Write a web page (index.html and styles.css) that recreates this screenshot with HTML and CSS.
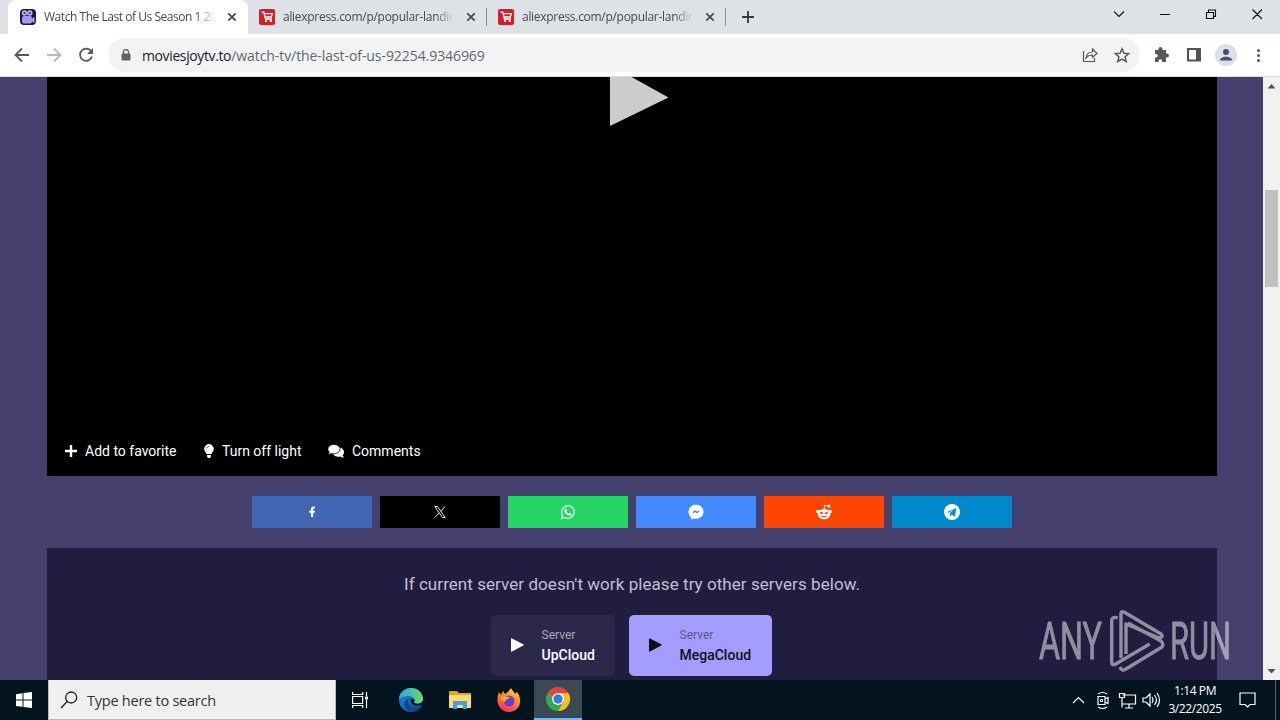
FILE: index.html
```html
<!DOCTYPE html>
<html lang="en">
<head>
<meta charset="utf-8">
<title>Watch The Last of Us Season 1</title>
<link rel="stylesheet" href="styles.css">
</head>
<body>
<svg class="defs" width="0" height="0">
  <symbol id="cart" viewBox="0 0 16 16"><rect width="16" height="16" rx="2" fill="#d21f2c"/><path d="M2.500 3.200h2.300l1.700 6.800h6.500M5 4.700h8.300l-1 3.300H6.200" fill="none" stroke="#fff" stroke-width="1.300"/><rect x="6" y="11" width="2" height="2" fill="#fff"/><rect x="10.800" y="11" width="2" height="2" fill="#fff"/></symbol>
  <symbol id="close" viewBox="0 0 10 10"><path d="M1.300 1.300l7.400 7.400M8.700 1.300L1.300 8.700" stroke="#45494d" stroke-width="1.700"/></symbol>
</svg>
<header class="tabs">
  <div class="tab active">
    <svg class="fav" viewBox="0 0 16 16"><rect width="16" height="16" rx="4" fill="#1d1a3e"/><circle cx="4.500" cy="4" r="2.700" fill="#b9b4f5"/><circle cx="9.800" cy="4" r="2.700" fill="#b9b4f5"/><circle cx="4.500" cy="4" r="1.100" fill="#302b58"/><circle cx="9.800" cy="4" r="1.100" fill="#302b58"/><rect x="2" y="7" width="10" height="7.500" rx="2" fill="#a39bf5"/><path d="M11 10l3.500-2v6L11 12z" fill="#a39bf5"/></svg>
    <span class="title t1">Watch The Last of Us Season 1 20</span>
    <svg class="x"><use href="#close"/></svg>
  </div>
  <div class="tab">
    <svg class="fav"><use href="#cart"/></svg>
    <span class="title">aliexpress.com/p/popular-landin</span>
    <svg class="x"><use href="#close"/></svg>
  </div>
  <div class="tab last">
    <svg class="fav"><use href="#cart"/></svg>
    <span class="title">aliexpress.com/p/popular-landin</span>
    <svg class="x"><use href="#close"/></svg>
  </div>
  <svg class="plus" viewBox="0 0 12 12"><path d="M6 0v12M0 6h12" stroke="#33363a" stroke-width="1.800"/></svg>
  <svg class="winctl" viewBox="0 0 166 34" fill="none" stroke="#111" stroke-width="1.100"><path d="M0 11.500l5 5 5-5"/><path d="M46 14.500h10M92.500 12.500h7v6h-7zM94.500 12.500v-2.500h7v6.500h-2M138.500 9.500l9.500 9.500M148 9.500l-9.500 9.500"/></svg>
</header>
<nav class="toolbar">
  <svg class="navs" viewBox="0 0 94 38" fill="none" stroke-width="1.800"><path d="M29 17H15.500M22 10.500L15.500 17l6.500 6.500" stroke="#55585c"/><path d="M47 17h13.500M54 10.500l6.500 6.500-6.500 6.500" stroke="#b7b9bc"/><path d="M91.200 13.200a6.100 6.100 0 1 0 .8 5.300" stroke="#55585c"/><path d="M93 10v6h-6z" fill="#55585c"/></svg>
  <div class="omni">
    <svg class="lock" viewBox="0 0 10 12"><rect x=".5" y="4.500" width="9" height="7" rx="1" fill="#5f6368"/><path d="M2.500 5V3a2.500 2.500 0 0 1 5 0v2" fill="none" stroke="#5f6368" stroke-width="1.300"/></svg>
    <span class="url"><b>moviesjoytv.to</b><i>/watch-tv/the-last-of-us-92254.9346969</i></span>
    <svg class="omniact" viewBox="0 0 48 18" fill="none" stroke="#55595d"><path d="M1.500 5v10.500h11V12M4 12c.5-4 3-6 6.500-6V3l4.500 4.500-4.500 4V9C7.500 9 5.500 10 4 12z" stroke-width="1.200"/><path d="M40 2.800l1.900 4.400 4.800.4-3.600 3.200 1.100 4.700-4.200-2.500-4.200 2.500 1.100-4.700-3.600-3.200 4.800-.4z" stroke-width="1.500"/></svg>
  </div>
  <svg class="ext" viewBox="0 0 120 34"><path d="M3 12h3.500V11a2 2 0 0 1 4 0v1H14v3.500h1a2 2 0 0 1 0 4h-1V24h-4v-1a1.700 1.700 0 0 0-3.400 0v1H3v-4.500h1a1.800 1.800 0 0 0 0-3.600H3z" fill="#55595d"/><path d="M35 10h14v13.500H35zM37 12v9.500h7V12z" fill-rule="evenodd" fill="#505458"/><circle cx="74" cy="17" r="11" fill="#dbdfe8"/><circle cx="74" cy="14" r="3" fill="#4b5068"/><path d="M68 22.500c0-5 12-5 12 0z" fill="#4b5068"/><g fill="#505458"><circle cx="106.500" cy="12.500" r="1.500"/><circle cx="106.500" cy="17.500" r="1.500"/><circle cx="106.500" cy="22.500" r="1.500"/></g></svg>
</nav>
<div class="viewport">
  <main class="page">
    <section class="player">
      <svg class="bigplay" viewBox="0 0 60 50"><path d="M1-12L59.500 20.500 1 49z" fill="#ccc"/></svg>
      <div class="actions">
        <span><svg class="a1" viewBox="0 0 12 12"><path d="M6 0v12M0 6h12" stroke="#fff" stroke-width="2.400"/></svg>Add to favorite</span>
        <span class="light"><svg class="a2" viewBox="0 0 10 14" fill="#fff"><path d="M5 0a5 5 0 0 1 3.200 8.600L7.500 10h-5l-.7-1.400A5 5 0 0 1 5 0zM3 11h4v1.500L6 14H4l-1-1.500z"/><path d="M2.500 4.500Q3 2.500 5 2.300" fill="none" stroke="#222" stroke-width=".7"/></svg>Turn off light</span>
        <span class="comments"><svg class="a3" viewBox="0 0 16 14"><path d="M7 4c5-2 9 1 9 4 0 1.500-.6 2.500-1.500 3.300L16 13.500c-2 0-3-.5-3.500-1C9 13.500 6 12 5 10z" fill="#fff"/><path d="M5.800.5c3.500 0 6.200 2 6.200 4.600s-2.700 4.700-6.200 4.700c-1 0-1.800-.1-2.500-.4-1 .8-2 1.100-3.300 1.100.7-.8 1.100-1.600 1.200-2.500C.5 7.200-.2 6.200-.2 5.100-.2 2.500 2.500.5 5.800.5z" fill="#fff" stroke="#000" stroke-width=".8"/></svg>Comments</span>
      </div>
    </section>
    <section class="share">
      <div class="fb"><svg viewBox="0 0 16 16"><path d="M7 13V8.800H5V6.700h2V5.300C7 3.500 8 2.600 9.500 2.600h1.500v2H10c-.7 0-.9.300-.9.900v1.200h1.900l-.3 2.100H9.100V13z" fill="#fff"/></svg></div>
      <div class="tw"><svg viewBox="0 0 16 16" fill="none" stroke="#eee"><path d="M2.800 2.500h2.700l7.700 11h-2.700zM13 2.500L8.800 7.200M7 9l-4.200 4.500" stroke-width="1"/></svg></div>
      <div class="wa"><svg viewBox="0 0 16 16" fill="none" stroke="#d9f8e4"><path d="M1.500 14.500l1-3.500a6.300 6.300 0 1 1 2.500 2.500z" stroke-width="1.300"/><path d="M5.300 4.500l1-.1.900 2-.7.900c.6 1.200 1.300 1.900 2.500 2.400l.9-.9 1.900.9c0 1.700-1.600 2.200-3 1.700-2.200-.7-4-2.500-4.500-4.400-.2-1 .3-2 1-2.500z" fill="#e8fff0" stroke="none"/></svg></div>
      <div class="ms"><svg viewBox="0 0 16 16"><path d="M8 .7c4.300 0 7.500 3 7.500 7s-3.200 7-7.500 7c-.8 0-1.500-.1-2.200-.3L3 15.500v-2.300C1.400 12 .5 10 .5 7.700.5 3.700 3.700.7 8 .7z" fill="#fff"/><path d="M5 8.800L7 7l2 1.500L11 7" fill="none" stroke="#448aff" stroke-width="1.500"/></svg></div>
      <div class="rd"><svg viewBox="0 0 16 16"><ellipse cx="8" cy="10" rx="6.300" ry="5.300" fill="#fff"/><circle cx="1.800" cy="7.500" r="1.800" fill="#fff"/><circle cx="14.200" cy="7.500" r="1.800" fill="#fff"/><path d="M8 5l.7-3.700 3.300.7" fill="none" stroke="#fff"/><circle cx="13" cy="2" r="1.500" fill="#fff"/><circle cx="5.500" cy="9" r="1.300" fill="#ff4500"/><circle cx="10.500" cy="9" r="1.300" fill="#ff4500"/><path d="M5 12q3 2 6 0" fill="none" stroke="#ff4500"/></svg></div>
      <div class="tg"><svg viewBox="0 0 16 16"><circle cx="8" cy="8" r="8" fill="#fff"/><path d="M3 8l9.300-4-1.500 8.700-3-2.100-1.600 1.700-.5-3 4.500-3.800-5.600 3.300z" fill="#0088cc"/></svg></div>
    </section>
    <section class="servers">
      <p>If current server doesn't work please try other servers below.</p>
      <div class="list">
        <div class="server"><svg viewBox="0 0 13 14"><path d="M0 .8q0-1 1-.4L12.300 6.200q1 .6 0 1.200L1 13.600q-1 .6-1-.5z" fill="#fff"/></svg><div><small>Server</small><strong>UpCloud</strong></div></div>
        <div class="server on"><svg viewBox="0 0 13 14"><path d="M0 .8q0-1 1-.4L12.300 6.200q1 .6 0 1.200L1 13.600q-1 .6-1-.5z" fill="#111"/></svg><div><small>Server</small><strong>MegaCloud</strong></div></div>
      </div>
    </section>
  </main>
  <aside class="scroll"><svg viewBox="0 0 17 603"><path d="M4.500 11.500L8.500 7l4 4.500z" fill="#505050"/><rect x="2" y="113" width="13" height="97" fill="#c1c1c1"/><path d="M4.500 592l4 4.500 4-4.500z" fill="#505050"/></svg></aside>
  <svg class="mark" viewBox="0 0 200 70"><g opacity=".5" fill="#fff" stroke="#fff" stroke-width=".8" font-family="Roboto" font-size="51"><text x="4" y="52" textLength="63" lengthAdjust="spacingAndGlyphs">ANY</text><text x="135" y="52" textLength="61" lengthAdjust="spacingAndGlyphs">RUN</text></g><g opacity=".5" fill="none" stroke="#fff" stroke-width="3.400" stroke-linejoin="round"><path d="M82.700 11q-6-2-6 3v41q0 4 4 2l34-20"/><path d="M91 47V17l33 14q5-1 2-4L89 5q-3-1-3 2v44"/><path d="M85 60q2 5 6 2l36-22q2-3-1-6L93 16"/></g></svg>
</div>
<footer class="taskbar">
  <div class="start"><svg viewBox="0 0 16 16"><path d="M0 2.200L6.500 1.300v6.300H0zM7.500 1.100L16 0v7.600H7.500zM0 8.500h6.500v6.300L0 13.900zM7.500 8.500H16V16l-8.500-1.100z" fill="#fff"/></svg></div>
  <div class="search"><svg viewBox="0 0 18 18" fill="none" stroke="#222" stroke-width="1.300"><circle cx="11.200" cy="6.500" r="5.500"/><path d="M7.200 10.500L1 17"/></svg><span>Type here to search</span></div>
  <div class="app first"><svg width="18" height="18" viewBox="0 0 18 18" fill="none" stroke="#fff" stroke-width="1.200"><path d="M1.600 1v2.500h10V1M1.600 17v-2.500h10V17M1.600 5.500h10v7h-10zM15.500 1v4M15.500 9v8"/><path d="M14 5.500h3v3h-3z" fill="#fff" stroke="none"/></svg></div>
  <div class="app"><svg width="24" height="24" viewBox="0 0 24 24"><defs><linearGradient id="eg"><stop stop-color="#25a6e8"/><stop offset="1" stop-color="#6ad866"/></linearGradient><linearGradient id="eb" y2="1"><stop stop-color="#168bda"/><stop offset="1" stop-color="#124b9c"/></linearGradient></defs><circle cx="12" cy="12" r="12" fill="url(#eb)"/><path d="M0 11C1-3 22-4 24 10c.5 4-3 6-7 6-3 0-4-1-2-3C16 8 8 6 0 11z" fill="url(#eg)"/><path d="M10 10c-3 6 2 12 12 9-6 7-16 5-17-2 0-3 2-6 5-7z" fill="#104888"/><path d="M12 11c-2 5 4 8 10 6l2 .5V13c-2 4-9 3-9 1 2-2 0-4-3-3z" fill="#03151f"/></svg></div>
  <div class="app"><svg width="22" height="20" viewBox="0 0 22 20"><path d="M0 2q0-1 1-1h7l2 2h12v15H0z" fill="#e5a521"/><path d="M0 5h22v13H0z" fill="#ffdc72"/><path d="M4 11h14v8h-4v-4H8v4H4z" fill="#3f9fe0"/></svg></div>
  <div class="app"><svg width="24" height="24" viewBox="0 0 24 24"><defs><linearGradient id="ff" x1=".8" x2=".3" y2="1"><stop stop-color="#ffe226"/><stop offset=".45" stop-color="#ff8a21"/><stop offset="1" stop-color="#f52a63"/></linearGradient></defs><path d="M14 0c1 3 3 3 4 6l2-2c5 6 5 19-8 20C2 24-2 14 2 4l2 3 2-4 2 3c2-1 4-3 6-6z" fill="url(#ff)"/><circle cx="12" cy="13" r="5.500" fill="#743ac5"/><path d="M4 9c3-1 5 0 9 0-2 3-5 2-5 5-2 0-4-3-4-5z" fill="#ffac27"/></svg></div>
  <div class="app current"><svg width="24" height="24" viewBox="0 0 24 24"><path d="M12 12L1.600 6A12 12 0 0 1 22.400 6z" fill="#ea4335"/><path d="M12 12L1.600 6A12 12 0 0 0 12 24l5-9z" fill="#34a853"/><path d="M12 6h10.400A12 12 0 0 1 12 24l5.200-9z" fill="#fbc116"/><path d="M2 6.500L7 15l3-6 2-3H3z" fill="#ea4335"/><path d="M1.600 6L7 15l4 2 1-5z" fill="#34a853"/><circle cx="12" cy="12" r="6" fill="#fff"/><circle cx="12" cy="12" r="4.700" fill="#347be8"/></svg></div>
  <svg class="tray" viewBox="0 0 90 40" fill="none" stroke="#fff" stroke-width="1.200"><path d="M1 23l5.500-5.500L12 23M26 16.500h7v8h-7zM33 19l3-1.500v6l-3-1.500M26 14q4.500-3 9 0M26 27q4.500 3 9 0M50.500 15h13v9h-13M57 24v4M53 28h8M47.500 13.500h5v4h-5zM50 17.500v10M71 18h3l4-4v12l-4-4h-3zM80 17q2 3 0 6M82.500 15q4 5 0 10M85 13q5 7 0 14"/><path d="M28.500 19.500h2v2h-2z" stroke-width="1"/></svg>
  <div class="clock"><div>1:14 PM</div><div>3/22/2025</div></div>
  <svg class="note" viewBox="0 0 17 16" fill="none" stroke="#fff" stroke-width="1.200"><path d="M1 1h15v11.500h-5L8.500 15 6 12.500H1z"/></svg>
  <div class="peek"></div>
</footer>
</body>
</html>
```
FILE: styles.css
```css
* { box-sizing: border-box; }
body { margin: 0; width: 1280px; height: 720px; overflow: hidden; display: flex; flex-direction: column; font-family: "Open Sans", "Noto Sans", sans-serif; background: #fff; }
svg { display: block; flex: none; }
.defs { position: absolute; }
.tabs { height: 34px; background: #dee1e6; display: flex; padding-left: 8px; }
.tab { width: 239px; display: flex; align-items: center; padding: 0 11px; position: relative; }
.tab.active { width: 240px; background: #fff; border-radius: 8px 8px 0 0; padding-left: 12px; }
.tab:not(.active)::after { content: ""; position: absolute; right: 0; top: 8px; width: 1px; height: 18px; background: #8a8d92; }
.fav { width: 16px; height: 16px; }
.title { width: 173px; margin-left: 8px; white-space: nowrap; font-size: 12px; line-height: 20px; letter-spacing: -.29px; color: #45484c; -webkit-mask-image: linear-gradient(to right, #000 152px, transparent 171px); mask-image: linear-gradient(to right, #000 152px, transparent 171px); }
.title.t1 { letter-spacing: -.46px; }
.x { width: 10px; height: 10px; margin-left: 10px; }
.plus { width: 12px; height: 12px; margin: 11px 0 0 16px; }
.winctl { width: 166px; height: 34px; margin-left: auto; }
.toolbar { height: 43px; padding: 4px 0 5px; display: flex; border-bottom: 1px solid #dcdde0; }
.navs { width: 94px; height: 38px; margin-right: 14px; }
.omni { width: 1032px; height: 34px; border-radius: 17px; background: #f1f3f4; display: flex; align-items: center; padding: 0 10px 0 13px; }
.lock { width: 10px; height: 12px; }
.url { margin-left: 11px; font-size: 14px; white-space: nowrap; color: #63676b; flex: 1; }
.url b { color: #202124; font-weight: 400; letter-spacing: -.38px; }
.url i { font-style: normal; letter-spacing: -.07px; }
.omniact { width: 48px; height: 18px; }
.ext { width: 120px; height: 34px; margin-left: 12px; }
.viewport { height: 603px; display: flex; position: relative; }
.page { width: 1263px; background: #453f6e; padding: 0 46px 0 47px; font-family: Roboto, sans-serif; }
.player { height: 399px; background: #000; display: flex; flex-direction: column; align-items: center; justify-content: space-between; }
.bigplay { width: 60px; height: 50px; margin-left: 14px; overflow: hidden; }
.actions { align-self: stretch; height: 50px; padding-left: 18px; display: flex; align-items: center; color: #fff; font-size: 14px; }
.actions span { display: flex; align-items: center; width: 139px; }
.actions .light { width: 124px; }
.actions svg { margin-right: 8px; }
.a1 { width: 12px; height: 12px; }
.a2 { width: 10px; height: 14px; }
.a3 { width: 16px; height: 14px; }
.share { height: 72px; display: flex; justify-content: center; gap: 8px; padding: 20px 0; }
.share div { width: 120px; height: 32px; display: grid; place-items: center; }
.share svg { width: 16px; height: 16px; }
.fb { background: #4267b2; }
.tw { background: #000; }
.wa { background: #25d366; }
.ms { background: #448aff; }
.rd { background: #ff4500; }
.tg { background: #0088cc; }
.servers { height: 132px; background: #211d41; padding-top: 25px; }
.servers p { margin: 0; height: 42px; line-height: 22px; text-align: center; font-size: 17px; letter-spacing: .06px; color: #c2bfcf; }
.list { display: flex; justify-content: center; gap: 14px; padding-right: 2px; }
.server { width: 124px; height: 61px; border-radius: 5px; background: #2c284b; display: flex; align-items: center; padding-left: 20px; color: #fff; }
.server.on { width: 143px; background: #a59cff; color: #111; }
.server svg { width: 13px; height: 14px; margin: 0 18px 2px 0; }
.server small, .server strong { display: block; }
.server small { font-size: 12px; line-height: 18px; color: #aaa8b7; }
.server.on small { color: #5c5690; }
.server strong { font-size: 14px; line-height: 22px; font-weight: 500; }
.scroll { width: 17px; background: #f1f1f1; }
.scroll svg { width: 17px; height: 603px; }
.mark { position: absolute; left: 1035px; top: 530px; width: 200px; height: 70px; }
.taskbar { height: 40px; background: #03141f; display: flex; align-items: center; color: #fff; }
.start { width: 48px; display: grid; place-items: center; }
.start svg { width: 16px; height: 16px; }
.search { width: 288px; height: 40px; background: #f0f0f0; border: 1px solid #bbb; border-top-color: #f0f0f0; display: flex; align-items: center; padding-left: 11px; color: #333; font-size: 14.500px; }
.search svg { width: 18px; height: 18px; }
.search span { margin-left: 9px; letter-spacing: -.24px; white-space: nowrap; }
.app { width: 49px; height: 40px; display: grid; place-items: center; }
.app.first { width: 50px; padding-right: 2px; }
.app.current { width: 48px; background: #394a54; border-bottom: 2px solid #76b9ed; margin-left: 1px; }
.tray { width: 90px; height: 40px; margin-left: auto; }
.clock { width: 72px; text-align: center; font-size: 12px; line-height: 18px; letter-spacing: -.4px; margin-left: -3px; }
.note { width: 17px; height: 16px; margin-left: 8px; }
.peek { width: 5px; height: 40px; border-left: 1px solid #5a6268; margin-left: 19px; }
```
